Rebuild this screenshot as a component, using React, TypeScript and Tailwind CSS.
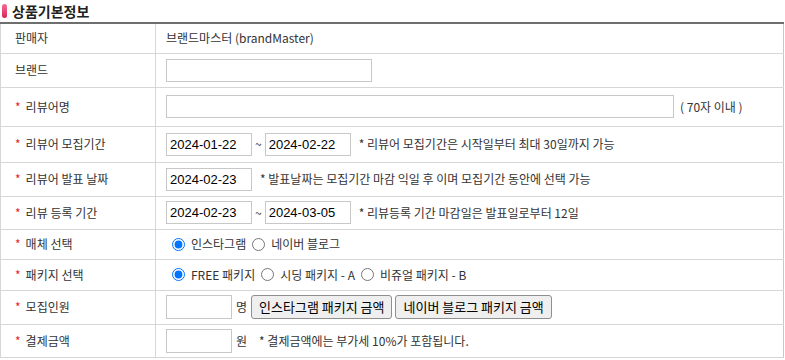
import { type ReactNode } from "react";

function Label({ children, required }: { children: ReactNode; required?: boolean }) {
  return (
    <th className="w-[155px] border-r border-[#d6d6d6] pl-[14px] text-left align-middle text-[12px] font-normal text-[#333]">
      {required && <span className="mr-[5px] text-[#e8232d]">*</span>}
      {children}
    </th>
  );
}

function TextBox({ className }: { className: string }) {
  return <input className={"border border-[#c8c8c8] bg-white px-1 [font-family:Liberation_Sans,Arial,sans-serif] text-[13px] text-black outline-none " + className} />;
}

function DateBox({ value }: { value: string }) {
  return (
    <input
      readOnly
      value={value}
      className="h-[23px] w-[86px] border border-[#c8c8c8] bg-white px-[3px] [font-family:Liberation_Sans,Arial,sans-serif] text-[13px] text-black outline-none"
    />
  );
}

function Note({ children }: { children: ReactNode }) {
  return <span className="text-[12px] text-[#333]">{children}</span>;
}

function Radio({ label, checked, name }: { label: string; checked?: boolean; name: string }) {
  return (
    <label className="flex items-center gap-[6px] text-[12px] text-[#333]">
      <input type="radio" name={name} defaultChecked={checked} className="m-0 h-[13px] w-[13px]" />
      {label}
    </label>
  );
}

function Btn({ children }: { children: ReactNode }) {
  return (
    <button className="h-[24px] rounded-[3px] border border-[#8f8f8f] bg-[#efefef] px-[7px] text-[13px] text-black">
      {children}
    </button>
  );
}

export default function App() {
  const rowClass = "border-b border-[#d6d6d6]";
  const cellClass = "pl-[10px] align-middle text-[12px] text-[#333]";

  return (
    <div className="h-[360px] w-[785px] bg-white [font-family:Noto_Sans_CJK_KR,Noto_Sans,sans-serif]">
      <div className="flex h-[22px] items-center pl-[2px]">
        <span className="h-[14px] w-[5px] rounded-[3px] bg-gradient-to-b from-[#f06c96] to-[#d81b5a]" />
        <h2 className="ml-[5px] text-[14px] font-bold text-[#222]">상품기본정보</h2>
      </div>
      <table className="w-[784px] border-collapse border-t-2 border-t-[#6e6e6e] border-r border-r-[#c8c8c8] border-l border-l-[#d6d6d6]">
        <tbody>
          <tr className={`${rowClass} h-[30px]`}>
            <Label>판매자</Label>
            <td className={cellClass}>브랜드마스터 (brandMaster)</td>
          </tr>
          <tr className={`${rowClass} h-[34px]`}>
            <Label>브랜드</Label>
            <td className={cellClass}>
              <TextBox className="h-[23px] w-[206px]" />
            </td>
          </tr>
          <tr className={`${rowClass} h-[39px]`}>
            <Label required>리뷰어명</Label>
            <td className={cellClass}>
              <div className="flex items-center gap-[6px]">
                <TextBox className="h-[23px] w-[508px]" />
                <Note>( 70자 이내 )</Note>
              </div>
            </td>
          </tr>
          <tr className={`${rowClass} h-[36px]`}>
            <Label required>리뷰어 모집기간</Label>
            <td className={cellClass}>
              <div className="flex items-center">
                <DateBox value="2024-01-22" />
                <span className="mx-[3px] text-[12px]">~</span>
                <DateBox value="2024-02-22" />
                <span className="ml-[8px]">
                  <Note>* 리뷰어 모집기간은 시작일부터 최대 30일까지 가능</Note>
                </span>
              </div>
            </td>
          </tr>
          <tr className={`${rowClass} h-[34px]`}>
            <Label required>리뷰어 발표 날짜</Label>
            <td className={cellClass}>
              <div className="flex items-center gap-[8px]">
                <DateBox value="2024-02-23" />
                <Note>* 발표날짜는 모집기간 마감 익일 후 이며 모집기간 동안에 선택 가능</Note>
              </div>
            </td>
          </tr>
          <tr className={`${rowClass} h-[33px]`}>
            <Label required>리뷰 등록 기간</Label>
            <td className={cellClass}>
              <div className="flex items-center">
                <DateBox value="2024-02-23" />
                <span className="mx-[3px] text-[12px]">~</span>
                <DateBox value="2024-03-05" />
                <span className="ml-[8px]">
                  <Note>* 리뷰등록 기간 마감일은 발표일로부터 12일</Note>
                </span>
              </div>
            </td>
          </tr>
          <tr className={`${rowClass} h-[30px]`}>
            <Label required>매체 선택</Label>
            <td className={cellClass}>
              <div className="flex items-center gap-[6px] pl-[6px]">
                <Radio name="media" label="인스타그램" checked />
                <Radio name="media" label="네이버 블로그" />
              </div>
            </td>
          </tr>
          <tr className={`${rowClass} h-[31px]`}>
            <Label required>패키지 선택</Label>
            <td className={cellClass}>
              <div className="flex items-center gap-[6px] pl-[6px]">
                <Radio name="pkg" label="FREE 패키지" checked />
                <Radio name="pkg" label="시딩 패키지 - A" />
                <Radio name="pkg" label="비쥬얼 패키지 - B" />
              </div>
            </td>
          </tr>
          <tr className={`${rowClass} h-[34px]`}>
            <Label required>모집인원</Label>
            <td className={cellClass}>
              <div className="flex items-center gap-[3px]">
                <TextBox className="h-[24px] w-[66px]" />
                <span className="mx-[1px] text-[12px]">명</span>
                <Btn>인스타그램 패키지 금액</Btn>
                <Btn>네이버 블로그 패키지 금액</Btn>
              </div>
            </td>
          </tr>
          <tr className={`${rowClass} h-[33px]`}>
            <Label required>결제금액</Label>
            <td className={cellClass}>
              <div className="flex items-center">
                <TextBox className="h-[24px] w-[66px]" />
                <span className="ml-[4px] mr-[12px] text-[12px]">원</span>
                <Note>* 결제금액에는 부가세 10%가 포함됩니다.</Note>
              </div>
            </td>
          </tr>
        </tbody>
      </table>
    </div>
  );
}
